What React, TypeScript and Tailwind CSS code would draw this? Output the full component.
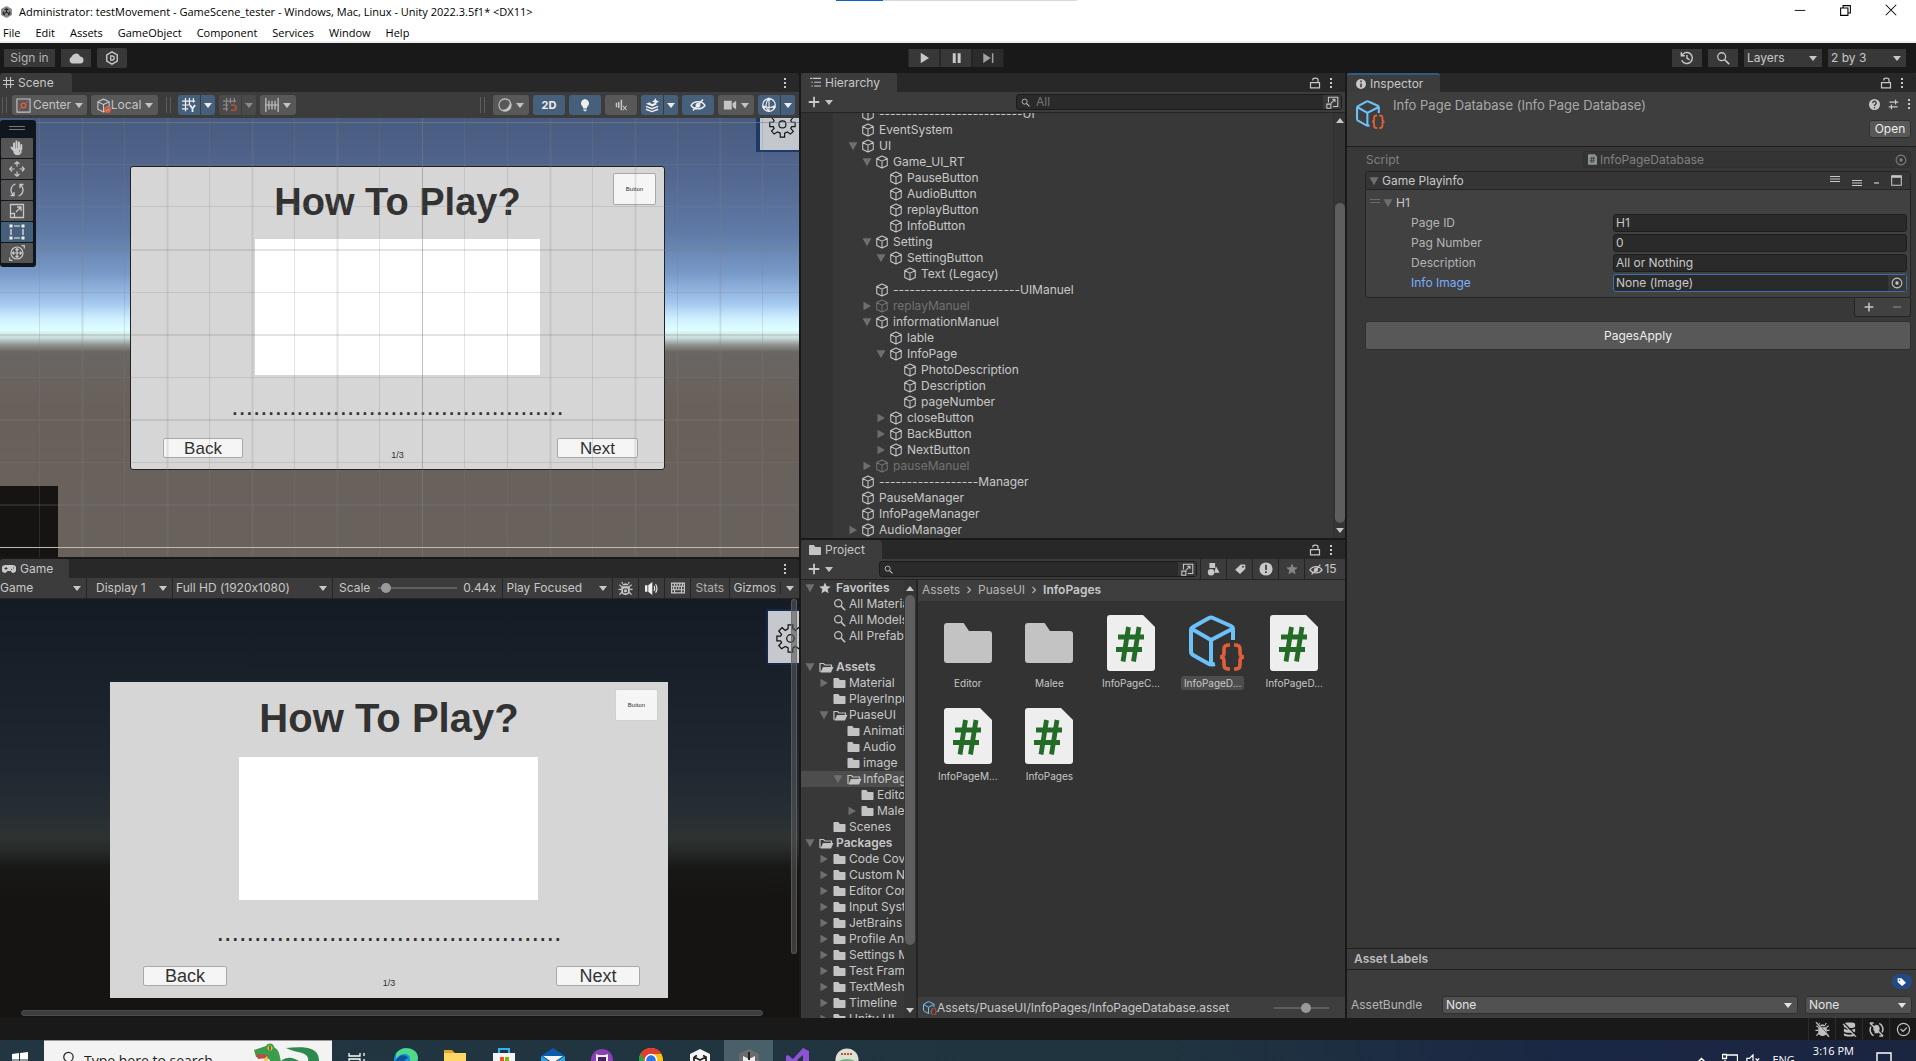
import React, { ReactNode } from "react";

/* ---------- small icons ---------- */

type IconProps = { className?: string };

const Svg = ({ className = "", box = 16, children }: { className?: string; box?: number; children: ReactNode }) => (
  <svg viewBox={`0 0 ${box} ${box}`} className={`shrink-0 ${className}`} fill="none" stroke="currentColor" aria-hidden="true">
    {children}
  </svg>
);

const Down = ({ className = "" }: IconProps) => (
  <svg viewBox="0 0 8 5" className={`h-[5px] w-2 shrink-0 ${className}`} fill="currentColor" aria-hidden="true">
    <path d="M0 0h8L4 5z" />
  </svg>
);
const Up = ({ className = "" }: IconProps) => (
  <svg viewBox="0 0 8 5" className={`h-[5px] w-2 shrink-0 ${className}`} fill="currentColor" aria-hidden="true">
    <path d="M0 5h8L4 0z" />
  </svg>
);
const Fold = ({ open, className = "" }: { open: boolean; className?: string }) => (
  <svg viewBox="0 0 10 10" className={`h-[10px] w-[10px] shrink-0 text-[#6e6e6e] ${className}`} fill="currentColor" aria-hidden="true">
    <path d={open ? "M.5 1.2h9L5 9.2z" : "M1.5 .8v8.4L9 5z"} />
  </svg>
);
const Cube = ({ className = "size-[14px]" }: IconProps) => (
  <Svg className={className}>
    <path strokeWidth="1.2" strokeLinejoin="round" d="M8 1.2 14 4v8l-6 2.9L2 12V4zM2.2 4.2 8 7l5.8-2.8M8 7v7.6" />
  </Svg>
);
const Kebab = () => (
  <Svg className="h-3 w-1">
    <path d="M4-12h8v8H4zM4 4h8v8H4zM4 20h8v8H4z" fill="currentColor" stroke="none" />
  </Svg>
);
const Lock = () => (
  <Svg className="size-3">
    <path strokeWidth="1.6" d="M2 7.5h12v7H2zM5 4.500V3.500C5 .8 12 .8 12 3.500v4" />
  </Svg>
);
const Search = ({ className = "size-3" }: IconProps) => (
  <Svg className={className}>
    <circle cx="6.500" cy="6.500" r="4.500" strokeWidth="1.5" />
    <path strokeWidth="1.8" d="m10 10 5 5" />
  </Svg>
);
const Popout = () => (
  <Svg className="size-[13px]">
    <path strokeWidth="1.3" d="M3 8V1.500h11.500V13H8.500M1 10h5v5H1zM6 9l5-5M7.500 4H11v3.500" />
  </Svg>
);
const Folder = ({ className = "h-[10px] w-[13px]" }: IconProps) => (
  <svg viewBox="0 0 24 20" className={`shrink-0 ${className}`} fill="#c3c3c3" aria-hidden="true">
    <path d="M1.500 0h8.300l2.700 4H22.500a1.500 1.500 0 0 1 1.500 1.500v13a1.500 1.500 0 0 1-1.500 1.500h-21A1.500 1.500 0 0 1 0 18.500v-17A1.500 1.500 0 0 1 1.500 0z" />
  </svg>
);
const FolderOpen = () => (
  <svg viewBox="0 0 15 11" className="h-[11px] w-[15px] shrink-0" fill="none" stroke="#c3c3c3" aria-hidden="true">
    <path d="M1 10V1.500h3.500L6 3h6.500v2" strokeWidth="1.2" />
    <path d="M4 5h10.500l-2.500 5.500H1.500z" fill="#c3c3c3" stroke="none" />
  </svg>
);
const Star = ({ className = "size-3" }: IconProps) => (
  <Svg className={className}>
    <path fill="currentColor" stroke="none" d="m8 .5 2.200 5 5.500.500-4.200 3.600 1.300 5.400L8 12.200 3.200 15l1.300-5.400L.3 6l5.500-.5z" />
  </Svg>
);
const Tag = ({ className = "size-3" }: IconProps) => (
  <Svg className={className}>
    <path fill="currentColor" stroke="none" fillRule="evenodd" d="M9 2h6v6l-7 6.500L1.500 9zM12 3.800a1.300 1.300 0 1 0 0 2.600 1.300 1.300 0 0 0 0-2.600z" />
  </Svg>
);
const EyeOff = ({ className = "h-3 w-4" }: IconProps) => (
  <svg viewBox="0 0 16 12" className={`shrink-0 ${className}`} fill="none" stroke="currentColor" aria-hidden="true">
    <path strokeWidth="1.400" d="M1 6.500C4 1.500 12 1.500 15 6.500 12 11 4 11 1 6.500zM13 .5 3 11.500" />
    <circle cx="8" cy="6.300" r="2" fill="currentColor" />
  </svg>
);
const ObjectCube = ({ className = "" }: IconProps) => (
  <Svg className={className} box={56}>
    <path stroke="#6cc1f8" strokeWidth="4" strokeLinejoin="round" strokeLinecap="butt" d="M44 25V14Q44 12 42 11L24 3Q22 2 20 3L4 12Q2 13 2 15V36Q2 39 4 40L20 49Q22 50 26 49M3 14l19 11 21-11M22 25v24" />
    <path stroke="#df5f3a" strokeWidth="3.600" d="M41 30h-1q-5 0-5 4v4q0 4-4 4 4 0 4 4v4q0 4 5 4h1M45 30h1q5 0 5 4v4q0 4 4 4-4 0-4 4v4q0 4-5 4h-1" />
  </Svg>
);
const Sharp = ({ className = "" }: IconProps) => (
  <svg viewBox="0 0 48 56" className={className} fill="none" aria-hidden="true">
    <path d="M3 0h33l12 12v41a3 3 0 0 1-3 3H3a3 3 0 0 1-3-3V3a3 3 0 0 1 3-3z" fill="#eee" />
    <path d="M11 22h26M9 34.500h26M21.500 12 16 46.500M32 12l-5.500 34.500" stroke="#256b28" strokeWidth="4.800" />
  </svg>
);
const Gear = ({ className = "" }: IconProps) => (
  <Svg className={className} box={32}>
    <path
      strokeWidth="1.300"
      stroke="#111"
      d="M14 6V2h5v4l3 2 3-3 3.500 3.500L26 12l1 2h4v5h-4l-1 2 3 3.500-3.500 3L22 25l-3 1.500V31h-5v-4.500L11 25l-4 2.500L4 24l3-3-1-2H2v-5h4l1-2-3-3.500L7.500 5 11 8z"
    />
    <circle cx="16.500" cy="16.500" r="4" strokeWidth="1.300" stroke="#111" />
  </Svg>
);
const UnityLogo = ({ className = "" }: IconProps) => (
  <Svg className={className} box={24}>
    <path d="m12 1 10 5.500v11L12 23 2 17.500v-11z" fill="currentColor" stroke="none" />
    <path d="M12 12V5.500M12 12l-6 3.500M12 12l6 3.500M8.500 8 12 6l3.500 2M6 11v4.500l3.500 2.200M18 11v4.500l-3.500 2.200" stroke="#222" strokeWidth="2" />
  </Svg>
);
const Target = () => (
  <Svg className="size-3">
    <circle cx="8" cy="8" r="6.500" strokeWidth="1.400" />
    <circle cx="8" cy="8" r="2.200" fill="currentColor" stroke="none" />
  </Svg>
);
const Plus = ({ className = "size-3" }: IconProps) => (
  <Svg className={className}>
    <path strokeWidth="2.400" d="M8 1v14M1 8h14" />
  </Svg>
);
const Bug = ({ className = "size-4", off = false }: { className?: string; off?: boolean }) => (
  <Svg className={className}>
    <path strokeWidth="1.300" d="M4 6 1.500 4M12 6l2.500-2M3.500 9H.5M12.500 9h3M4 12l-2.500 2.500M12 12l2.500 2.500M5 3 4 1M11 3l1-2" />
    <path fill="currentColor" stroke="none" d="M4.500 4.500C5 2 11 2 11.500 4.500zM3.500 5.500h9v6c0 4.500-9 4.500-9 0z" />
    <path stroke="#2f2f2f" strokeWidth="1" d={off ? "M3 1l12 14" : "M6 8.500h4v4H6z"} />
    {off && <path strokeWidth="1.300" d="M1 0l14 16" />}
  </Svg>
);
const Grip = ({ className = "" }: IconProps) => <span className={`h-4 w-[5px] shrink-0 border-x border-[#5c5c5c] ${className}`} />;

/* ---------- shared controls ---------- */

function Select({ label, value, className = "", text = "pl-1" }: { label: string; value: string; className?: string; text?: string }) {
  return (
    <div className={`relative flex shrink-0 items-center ${className}`}>
      <select aria-label={label} className={`h-full w-full appearance-none bg-transparent outline-none ${text}`}>
        <option>{value}</option>
      </select>
      <Down className="pointer-events-none absolute right-[5px]" />
    </div>
  );
}

function ToolButton({ label, on = false, menu = false, split = false, dim = false, className = "w-8", children }: {
  label: string; on?: boolean; menu?: boolean; split?: boolean; dim?: boolean; className?: string; children: ReactNode;
}) {
  const tone = on ? "bg-[#46607c] text-[#eeeeee]" : dim ? "bg-[#4a4a4a] text-[#8a8a8a]" : "bg-[#585858] text-[#c4c4c4]";
  if (split)
    return (
      <div className="flex h-5 w-[37px] shrink-0 gap-px">
        <button aria-label={label} className={`flex w-[22px] items-center justify-center rounded-l-[3px] ${tone}`}>{children}</button>
        <button aria-label={`${label} options`} className={`flex flex-1 items-center justify-center rounded-r-[3px] ${tone}`}><Down /></button>
      </div>
    );
  return (
    <button aria-label={label} className={`flex h-5 shrink-0 items-center justify-center gap-1 rounded-[3px] ${tone} ${className}`}>
      {children}
      {menu && <Down />}
    </button>
  );
}

function PanelTabs({ icon, title, width, active = false, lock = false }: { icon: ReactNode; title: string; width: string; active?: boolean; lock?: boolean }) {
  return (
    <div className="flex h-[19px] shrink-0 items-stretch justify-between rounded-t-[3px] bg-[#282828]">
      <button className={`flex items-center gap-1 rounded-t-[3px] bg-[#3c3c3c] ${active ? "border-t-2 border-[#2c5d87]" : ""} ${width}`}>
        {icon}
        {title}
      </button>
      <div className="flex items-center gap-2 pr-3">
        {lock && <button aria-label={`Lock ${title}`}><Lock /></button>}
        <button aria-label={`${title} menu`}><Kebab /></button>
      </div>
    </div>
  );
}

/* ---------- title bar, main toolbar ---------- */

const menus = ["File", "Edit", "Assets", "GameObject", "Component", "Services", "Window", "Help"];

function TitleBar() {
  return (
    <header className="relative flex h-[43px] shrink-0 flex-col border-b-2 border-[#eef0f0] bg-white font-['Open_Sans',sans-serif] text-[12px] text-black">
      <div className="absolute top-0 left-[836px] flex h-px w-[241px] bg-[#d9d9d9]"><span className="w-[47px] bg-[#0a64c8]" /></div>
      <div className="flex h-6 items-center">
        <UnityLogo className="h-[14px] w-[13px] text-[#8a8a8a]" />
        <span className="ml-1.5 text-[11px]">Administrator: testMovement - GameScene_tester - Windows, Mac, Linux - Unity 2022.3.5f1* &lt;DX11&gt;</span>
        <div className="ml-auto flex gap-8 pr-[18px] pb-1">
          <button aria-label="Minimize"><Svg className="size-[14px]"><path d="M2 8.500h12" /></Svg></button>
          <button aria-label="Restore"><Svg className="size-[13px]"><path strokeWidth="1.300" d="M2 5h9v9H2zM5 5V2h9v9h-3" /></Svg></button>
          <button aria-label="Close"><Svg className="size-[14px]"><path strokeWidth="1.200" d="m2 2 12 12M14 2 2 14" /></Svg></button>
        </div>
      </div>
      <nav className="flex flex-1 items-center gap-[15px] pl-[3px] text-[11px]">
        {menus.map((m) => <button key={m}>{m}</button>)}
      </nav>
    </header>
  );
}

function MainToolbar() {
  return (
    <div className="relative flex h-[30px] shrink-0 items-center justify-between bg-[#191919] px-1">
      <div className="flex items-center gap-[6px]">
        <button className="h-[18px] w-[51px] bg-[#383838] text-[#b4b4b4]">Sign in</button>
        <button aria-label="Cloud services" className="flex h-[18px] w-[30px] items-center justify-center bg-[#383838]">
          <Svg className="size-4"><path fill="currentColor" stroke="none" d="M4 13.500a3.500 3.500 0 0 1-.5-6.500 2.500 2.500 0 0 1 1.500-2 4 4 0 0 1 7 1.500 3.500 3.500 0 0 1 0 7z" /></Svg>
        </button>
        <button aria-label="Version control" className="flex h-5 w-[30px] items-center justify-center rounded-[2px] bg-[#383838]">
          <Svg className="size-[14px]"><path strokeWidth="1.600" d="m8 1 6 3.500v7L8 15l-6-3.500v-7z" /><path strokeWidth="1.500" d="M6.500 5.500H8a2.200 2.200 0 0 1 0 5H6.500z" /></Svg>
        </button>
      </div>
      <div className="absolute left-1/2 flex -translate-x-1/2 gap-px pr-1">
        <button aria-label="Play" className="flex h-[18px] w-[31px] items-center justify-center bg-[#383838]"><Svg className="size-3"><path fill="currentColor" stroke="none" d="m3 1 11 7-11 7z" /></Svg></button>
        <button aria-label="Pause" className="flex h-[18px] w-[31px] items-center justify-center bg-[#383838]"><Svg className="size-3"><path fill="currentColor" stroke="none" d="M3 1.500h4v13H3zM9.500 1.500h4v13h-4z" /></Svg></button>
        <button aria-label="Step" className="flex h-[18px] w-[31px] items-center justify-center bg-[#2b2b2b] text-[#a0a0a0]"><Svg className="size-3"><path fill="currentColor" stroke="none" d="m1 1.500 10 6.500-10 6.500zM12.500 1.500h2v13h-2z" /></Svg></button>
      </div>
      <div className="flex h-[18px] items-stretch gap-1.5 pr-1.5">
        <button aria-label="Undo history" className="flex w-[30px] items-center justify-center bg-[#383838]">
          <Svg className="size-[14px]"><path strokeWidth="1.600" d="M2 5.500A6.300 6.300 0 1 1 2 10.500M1.500 1.500v4h4M8 4.500V8.500l3 1.500" /></Svg>
        </button>
        <button aria-label="Search" className="flex w-[30px] items-center justify-center bg-[#383838]"><Search className="size-[14px]" /></button>
        <Select label="Layers" value="Layers" className="w-[78px] bg-[#383838]" text="pl-[3px]" />
        <Select label="Layout" value="2 by 3" className="w-[78px] bg-[#383838]" text="pl-[3px]" />
      </div>
    </div>
  );
}

/* ---------- scene panel ---------- */

const sceneTools: { name: string; on?: boolean; icon: ReactNode }[] = [
  { name: "View", icon: <path strokeWidth="2" strokeLinecap="round" d="M5 8V3.500M7.500 7.500V1.500M10 8V2.500M12.300 9V5M2.500 7.500l3 3.500M5.500 9v3.500a3.500 3.500 0 0 0 6 0V8L7 9v3L9 13v-3" /> },
  { name: "Move", icon: <path strokeWidth="1.200" d="M8 .5v5M8 10.500v5M.5 8h5M10.500 8h5M5.500 3 8 .8 10.500 3M5.500 13 8 15.200l2.500-2.200M3 5.500.8 8 3 10.500M13 5.500 15.200 8 13 10.500" /> },
  { name: "Rotate", icon: <path strokeWidth="1.300" d="M6.500 2A6.300 6.300 0 0 0 4.500 13M9.500 14A6.300 6.300 0 0 0 11.500 3M1.500 13.500H5V10M14.500 2.500H11V6" /> },
  { name: "Scale", icon: <path strokeWidth="1.300" d="M1.500 1.500h13v13h-13zM1.500 10.500h4v4M7 9l5-5M8 4h4v4" /> },
  { name: "Rect", on: true, icon: <><path strokeWidth="1.200" d="M5 2h6M5 14h6M2 5v6M14 5v6" /><path fill="currentColor" stroke="none" d="M.5.5h3v3h-3zM12.500.5h3v3h-3zM.5 12.500h3v3h-3zM12.500 12.500h3v3h-3z" /></> },
  { name: "Transform", icon: <><circle cx="8" cy="8" r="6" strokeWidth="1.200" /><path strokeWidth="1.200" d="M8 3.500v9M3.500 8h9M6.500 5 8 3.500 9.500 5M6.500 11 8 12.500 9.500 11M5 6.500 3.500 8 5 9.500M11 6.500 12.500 8 11 9.500M12.500.7h2.800v2.800M3.500 15.300H.7v-2.800" /></> },
];

const vMinor = [39, 124, 209, 294, 379, 464, 592, 677, 762];
const vMajor = [82, 167, 252, 337, 550, 635, 720];

function SceneGrid() {
  return (
    <svg className="pointer-events-none absolute inset-0 h-full w-full" fill="none" stroke="#808080" aria-hidden="true">
      {vMinor.map((x) => <path key={x} d={`M${x + 0.5} 0v2000`} strokeOpacity=".22" />)}
      {vMajor.map((x) => <path key={x} d={`M${x + 0.5} 0v2000`} strokeOpacity=".2" strokeWidth="2" />)}
      <path d="M422.5 0v2000" strokeOpacity=".5" />
      <path d="M507.500 0v2000" strokeOpacity=".25" />
      {[46, 88, 174, 259, 344].map((y) => <path key={y} d={`M0 ${y + 0.5}h3000`} strokeOpacity=".22" />)}
      {[132, 217, 302, 387].map((y) => <path key={y} d={`M0 ${y}h3000`} strokeOpacity=".22" strokeWidth="2" />)}
      <path d="M0 4.500h3000" strokeOpacity=".6" />
      <path d="M0 429.500h3000" stroke="#bdb9b5" />
    </svg>
  );
}

const dots = ".".repeat(46);
const boardButton = "absolute flex items-center justify-center rounded-[2px] border border-[#a9a9a9] bg-[#f5f5f5] text-[#323232]";

function ScenePanel() {
  return (
    <section className="flex min-h-0 flex-[484_1_0] flex-col">
      <PanelTabs
        title="Scene"
        width="w-[72px] pl-[3px]"
        icon={<Svg className="size-[11px]"><path strokeWidth="1.500" d="M5 0v16M11 0v16M0 5h16M0 11h16" /></Svg>}
      />
      <div className="flex h-[26px] shrink-0 items-center gap-1 bg-[#3c3c3c] pr-1 pl-[2px]">
        <Grip className="mr-px" />
        <ToolButton label="Tool handle position" menu className="w-[75px]">
          <span className="flex items-center gap-0.5">
            <Svg className="size-[15px]"><path strokeWidth="1.200" d="M1 1h14v14H1z" /><g stroke="#e0603c"><circle cx="8" cy="8" r="2.500" strokeWidth="1.500" /><path d="m3 13 2-2M11 5l2-2" /></g></Svg>
            Center
          </span>
        </ToolButton>
        <ToolButton label="Tool handle rotation" menu className="w-[67px]">
          <span className="flex items-center">
            <span className="relative"><Cube className="size-[15px]" /><span className="absolute right-0 bottom-0 size-[7px] rounded-full border-2 border-[#e0603c]" /></span>
            Local
          </span>
        </ToolButton>
        <Grip className="mr-[3px] ml-1" />
        <ToolButton label="Grid visibility" on split>
          <Svg className="size-[14px]"><path strokeWidth="1.400" d="M4 0v15M8.500 0v8M13 0v5M0 3.500h15M0 8h8M0 12.500h7" /><path strokeWidth="2" d="m9 8 3 4 3-4M12 12v4" /></Svg>
        </ToolButton>
        <ToolButton label="Grid snapping" dim split>
          <Svg className="size-[14px]"><path strokeWidth="1.400" d="M4 0v15M8.500 0v6M13 0v5M0 3.500h15M0 8h6M0 12.500h6" /><path stroke="#a8503a" strokeWidth="2" d="M9 8h3a3 3 0 0 1 0 6H9" /></Svg>
        </ToolButton>
        <ToolButton label="Increment snapping" menu className="w-9">
          <Svg className="size-[14px]"><path strokeWidth="1.400" d="M1 0v16M15 0v16M4.500 3v10M8 3v10M11.500 3v10M0 8h16" /></Svg>
        </ToolButton>
        <Grip className="mr-1 ml-auto" />
        <ToolButton label="Draw mode" menu className="w-9">
          <Svg className="size-[14px]"><circle cx="8" cy="8" r="7" strokeWidth="1.200" /><path fill="currentColor" stroke="none" d="M13 3a7 7 0 1 1-10 10 8 8 0 0 0 10-10z" /></Svg>
        </ToolButton>
        <ToolButton label="2D view" on><span className="text-[11px] font-bold">2D</span></ToolButton>
        <ToolButton label="Scene lighting" on>
          <Svg className="size-[14px]"><path fill="currentColor" stroke="none" d="M8 1a5 5 0 0 1 2.500 9L10 12H6l-.5-2A5 5 0 0 1 8 1zM6 13h4v1L8 15.500 6 14z" /></Svg>
        </ToolButton>
        <ToolButton label="Scene audio">
          <Svg className="size-3"><path strokeWidth="2" d="M2 5v6M5 4v8M8.500 1v14" /><path strokeWidth="1.400" d="m10.500 9 5 6M15.500 9l-5 6" /></Svg>
        </ToolButton>
        <ToolButton label="Effects" on split>
          <Svg className="size-[15px]"><path fill="currentColor" stroke="none" d="M1 6l4-1.500 2 2 3-1 3 1L8 9zM11 0l1 2.500L15 4l-2.500 1L11 7 10 4.500 7.500 4 10 2.500z" /><path strokeWidth="1.500" d="m1 9 6.500 2.500L14 9M1 12l6.500 2.500L14 12" /></Svg>
        </ToolButton>
        <ToolButton label="Hidden objects" on><EyeOff /></ToolButton>
        <ToolButton label="Camera settings" menu className="w-9">
          <Svg className="size-[14px]"><path fill="currentColor" stroke="none" d="M1 3h9v10H1zM11 6l4-3v10l-4-3z" /></Svg>
        </ToolButton>
        <ToolButton label="Gizmos" on split>
          <Svg className="size-[16px]"><circle cx="8" cy="8" r="6.300" strokeWidth="1.200" /><path strokeWidth="1.100" d="M8 1.500c-4 4-4 9 0 13M2 9c4 2 8 2 12 0M8 2v13" /><circle cx="8" cy="2" r="1.600" fill="currentColor" stroke="none" /><circle cx="3" cy="10" r="1.600" fill="currentColor" stroke="none" /><circle cx="13" cy="10" r="1.600" fill="currentColor" stroke="none" /></Svg>
        </ToolButton>
      </div>

      <div className="relative min-h-0 flex-1 overflow-hidden bg-[linear-gradient(#485b80_0px,#536890_60px,#5f7aa6_115px,#7899c7_155px,#a3c7ee_185px,#cdeeff_200px,#dfffff_212px,#c9dbdb_220px,#8f9290_227px,#6a6663_234px,#69605a_290px,#69625c_440px)]">
        <div className="absolute bottom-0 left-0 h-[71px] w-[58px] bg-[#151413]" />
        <div className="absolute top-0 right-0 h-[34px] w-[43px] border-b-2 border-l-4 border-[#1d3a66] bg-[#c3c8cf]">
          <Gear className="absolute -top-2 left-2 size-7" />
        </div>
        <div className="absolute top-12 left-[130px] h-[304px] w-[535px] rounded-[3px] border border-[#222] bg-[#d6d6d6] font-['Liberation_Sans',sans-serif] text-[#323232]">
          <h2 className="absolute inset-x-0 top-[13px] text-center text-[38px] leading-[44px] font-bold">How To Play?</h2>
          <div className="absolute top-[72px] left-[124px] h-[136px] w-[285px] bg-white" />
          <p className="absolute inset-x-0 top-[226px] text-center text-[26px] leading-[26px] whitespace-nowrap">{dots}</p>
          <button className={`${boardButton} top-[6px] left-[482px] h-8 w-[43px] text-[6px]`}>Button</button>
          <button className={`${boardButton} top-[271px] left-8 h-5 w-20 text-[17px] leading-none`}>Back</button>
          <button className={`${boardButton} top-[271px] left-[426px] h-5 w-[81px] text-[17px] leading-none`}>Next</button>
          <span className="absolute inset-x-0 top-[283px] text-center text-[9px] leading-[10px]">1/3</span>
        </div>
        <SceneGrid />
        <div className="absolute top-0.5 left-0 flex h-[147px] w-9 flex-col items-start rounded-[3px] bg-[#10161e] pl-px">
          <span className="mt-[6px] mb-2 ml-2 h-1 w-4 border-y border-[#777]" />
          <div className="flex flex-col gap-px">
            {sceneTools.map((t) => (
              <button key={t.name} aria-label={`${t.name} tool`} className={`flex h-5 w-8 items-center justify-center rounded-[1px] ${t.on ? "bg-[#46607c] text-[#eee]" : "bg-[#545454]"}`}>
                <Svg className="size-4">{t.icon}</Svg>
              </button>
            ))}
          </div>
        </div>
      </div>
    </section>
  );
}

/* ---------- game panel ---------- */

function GamePanel() {
  const cell = "flex h-full shrink-0 items-center border-r border-[#242424]";
  return (
    <section className="flex min-h-0 flex-[459_1_0] flex-col">
      <PanelTabs
        title="Game"
        width="w-[69px] pl-[2px]"
        icon={<svg viewBox="0 0 14 8" className="h-2 w-[14px] shrink-0" aria-hidden="true"><path d="M3.500 0h7a3.500 3.500 0 0 1 0 8L8.500 6h-3l-2 2a3.500 3.500 0 0 1 0-8z" fill="currentColor" /><path d="M2.500 3.500h3M4 2v3M9 4.500h1M11 3h1" stroke="#3c3c3c" /></svg>}
      />
      <div className="flex h-[21px] shrink-0 items-center border-b border-[#242424] bg-[#3c3c3c]">
        <Select label="View" value="Game" className={`${cell} w-[87px]`} text="pl-0" />
        <Select label="Display" value="Display 1" className={`${cell} w-[86px]`} text="pl-[9px]" />
        <Select label="Resolution" value="Full HD (1920x1080)" className={`${cell} w-[160px]`} text="pl-[3px]" />
        <div className={`${cell} min-w-0 flex-1 pl-1.5`}>
          <label htmlFor="game-scale" className="mr-2">Scale</label>
          <input id="game-scale" type="range" min="0" max="100" defaultValue="4" className="h-[10px] w-[79px] appearance-none bg-[linear-gradient(#5e5e5e,#5e5e5e)] bg-[length:100%_2px] bg-center bg-no-repeat [&::-webkit-slider-thumb]:size-[10px] [&::-webkit-slider-thumb]:appearance-none [&::-webkit-slider-thumb]:rounded-full [&::-webkit-slider-thumb]:bg-[#999]" />
          <span className="ml-1.5">0.44x</span>
        </div>
        <Select label="Play mode" value="Play Focused" className={`${cell} w-[110px]`} text="pl-[3px]" />
        <button aria-label="Frame debugger" className={`${cell} w-[26px] justify-center`}><Bug className="size-[15px]" /></button>
        <button aria-label="Mute audio" className={`${cell} w-[26px] justify-center text-[#eee]`}>
          <Svg className="size-[13px]"><path fill="currentColor" stroke="none" d="M0 4h3v8H0zM4 4l5-4v16l-5-4z" /><path strokeWidth="1.400" d="M11 5q2 3 0 6M13 3q3.500 5 0 10" /></Svg>
        </button>
        <button aria-label="Shortcuts" className={`${cell} w-[26px] justify-center`}>
          <Svg className="size-[14px]"><path strokeWidth="1.300" d="M.7 2.500h14.600v11H.7zM1 6h14M1 10h14M4 2.500V6M7 2.500V6M10 2.500V6M13 2.500V6M3 6v4M6 6v4M9 6v4M12 6v4M4 10v3.500M12 10v3.500" /></Svg>
        </button>
        <button className={`${cell} w-[39px] pl-1 text-[#b0b0b0]`}>Stats</button>
        <button className="flex h-full shrink-0 items-center pl-[3px]">Gizmos</button>
        <button aria-label="Gizmos options" className="ml-1 flex h-3 w-[19px] shrink-0 items-center justify-center border-l border-[#242424]"><Down /></button>
      </div>

      <div className="relative min-h-0 flex-1 overflow-hidden bg-[linear-gradient(#151b25_0px,#19212b_90px,#1f2831_170px,#272e33_215px,#2e3332_240px,#252827_253px,#181817_268px,#161412_300px,#161412_420px)]">
        <div className="absolute top-[10px] right-0 h-14 w-[33px] border-2 border-r-0 border-[#14294a] bg-[#c6c8cd]">
          <Gear className="absolute top-3 left-[7px] size-[30px]" />
        </div>
        <div className="absolute top-[83px] left-[110px] h-[316px] w-[558px] bg-[#d6d6d6] font-['Liberation_Sans',sans-serif] text-[#323232]">
          <h2 className="absolute inset-x-0 top-[12px] text-center text-[40px] leading-[48px] font-bold">How To Play?</h2>
          <div className="absolute top-[75px] left-[129px] h-[143px] w-[299px] bg-white" />
          <p className="absolute inset-x-0 top-[237px] text-center text-[27px] leading-[27px] whitespace-nowrap">{dots}</p>
          <button className={`${boardButton} top-[7px] left-[505px] h-8 w-[43px] border-[#d0d0d0] text-[6px]`}>Button</button>
          <button className={`${boardButton} top-[284px] left-[33px] h-5 w-[84px] text-[18px] leading-none`}>Back</button>
          <button className={`${boardButton} top-[284px] left-[446px] h-5 w-[84px] text-[18px] leading-none`}>Next</button>
          <span className="absolute inset-x-0 top-[296px] text-center text-[9px] leading-[10px]">1/3</span>
        </div>
        <div className="absolute top-0 right-0.5 bottom-16 w-1.5 rounded-full border border-[#6a6a6a]/60 bg-[#555]/60" />
        <div className="absolute right-9 bottom-0.5 left-[21px] h-1.5 rounded-full border border-[#4c4c4c] bg-[#3c3c3c]" />
      </div>
    </section>
  );
}

/* ---------- hierarchy ---------- */

type Node = [depth: number, name: string, fold?: "open" | "closed", dim?: boolean];

const hierarchy: Node[] = [
  [0, "-".repeat(26) + "UI"],
  [0, "EventSystem"],
  [0, "UI", "open"],
  [1, "Game_UI_RT", "open"],
  [2, "PauseButton"],
  [2, "AudioButton"],
  [2, "replayButton"],
  [2, "InfoButton"],
  [1, "Setting", "open"],
  [2, "SettingButton", "open"],
  [3, "Text (Legacy)"],
  [1, "-".repeat(23) + "UIManuel"],
  [1, "replayManuel", "closed", true],
  [1, "informationManuel", "open"],
  [2, "lable"],
  [2, "InfoPage", "open"],
  [3, "PhotoDescription"],
  [3, "Description"],
  [3, "pageNumber"],
  [2, "closeButton", "closed"],
  [2, "BackButton", "closed"],
  [2, "NextButton", "closed"],
  [1, "pauseManuel", "closed", true],
  [0, "-".repeat(18) + "Manager"],
  [0, "PauseManager"],
  [0, "InfoPageManager"],
  [0, "AudioManager", "closed"],
];
const hierarchyIndent = ["pl-[15px]", "pl-[29px]", "pl-[43px]", "pl-[57px]"];

function AddButton({ label }: { label: string }) {
  return (
    <button aria-label={label} className="flex items-center gap-[5px] pl-[7px]">
      <Plus />
      <Down className="text-[#c4c4c4]" />
    </button>
  );
}

function HierarchyPanel() {
  return (
    <section className="flex min-h-0 flex-[465_1_0] flex-col bg-[#383838]">
      <PanelTabs
        title="Hierarchy"
        lock
        width="w-24 pl-[9px]"
        icon={<Svg className="size-[11px]"><path strokeWidth="1.500" d="M0 2h3M4 2h12M2 7.500h2M6 7.500h10M2 13h2M6 13h10" /></Svg>}
      />
      <div className="flex h-[21px] shrink-0 items-center justify-between border-b border-[#242424] bg-[#3c3c3c] pr-[3px]">
        <AddButton label="Create object" />
        <div className="flex h-4 w-[326px] items-center rounded-[3px] border border-[#1c1c1c] bg-[#2a2a2a] pl-1">
          <Search className="size-[9px]" />
          <input aria-label="Search hierarchy" placeholder="All" className="ml-1.5 min-w-0 flex-1 bg-transparent outline-none placeholder:text-[#757575]" />
          <button aria-label="Open search window" className="flex h-full w-[18px] items-center justify-center bg-[#383838]"><Popout /></button>
        </div>
      </div>
      <div className="flex min-h-0 flex-1 overflow-hidden">
        <div className="w-8 shrink-0 bg-[#323232]" />
        <ul className="-mt-[7px] min-w-0 flex-1">
          {hierarchy.map(([depth, name, fold, dim]) => (
            <li key={name} className={`flex h-4 items-center whitespace-nowrap ${hierarchyIndent[depth]} ${dim ? "text-[#727272]" : ""}`}>
              <span className="flex w-[13px]">{fold && <Fold open={fold === "open"} />}</span>
              <Cube />
              <span className="ml-1">{name}</span>
            </li>
          ))}
        </ul>
        <div className="flex w-3 shrink-0 flex-col items-center border-l border-[#303030] bg-[#353535] pt-[5px] pb-[5px]">
          <Up />
          <div className="flex w-[10px] flex-1 flex-col py-[5px]">
            <span className="flex-[75_1_0]" />
            <span className="flex-[319_1_0] rounded-full bg-[#5e5e5e]" />
          </div>
          <Down />
        </div>
      </div>
    </section>
  );
}

/* ---------- project ---------- */

type TreeNode = [depth: number, name: string, icon: "folder" | "open" | "search" | "star", fold?: "open" | "closed"];

const favorites: TreeNode[] = [
  [0, "Favorites", "star", "open"],
  [1, "All Materials", "search"],
  [1, "All Models", "search"],
  [1, "All Prefabs", "search"],
];
const projectTree: TreeNode[] = [
  [0, "Assets", "open", "open"],
  [1, "Material", "folder", "closed"],
  [1, "PlayerInput", "folder"],
  [1, "PuaseUI", "open", "open"],
  [2, "Animation", "folder"],
  [2, "Audio", "folder"],
  [2, "image", "folder"],
  [2, "InfoPages", "open", "open"],
  [3, "Editor", "folder"],
  [3, "Malee", "folder", "closed"],
  [1, "Scenes", "folder"],
  [0, "Packages", "open", "open"],
  [1, "Code Coverage", "folder", "closed"],
  [1, "Custom NUnit", "folder", "closed"],
  [1, "Editor Coroutines", "folder", "closed"],
  [1, "Input System", "folder", "closed"],
  [1, "JetBrains Rider Editor", "folder", "closed"],
  [1, "Profile Analyzer", "folder", "closed"],
  [1, "Settings Manager", "folder", "closed"],
  [1, "Test Framework", "folder", "closed"],
  [1, "TextMeshPro", "folder", "closed"],
  [1, "Timeline", "folder", "closed"],
  [1, "Unity UI", "folder", "closed"],
];
const treeIndent = ["pl-1", "pl-[18px]", "pl-8", "pl-[46px]"];

function TreeRow({ node: [depth, name, icon, fold] }: { node: TreeNode }) {
  return (
    <li className={`flex h-4 items-center whitespace-nowrap ${treeIndent[depth]} ${depth === 0 ? "font-semibold" : ""} ${name === "InfoPages" ? "bg-[#4d4d4d]" : ""}`}>
      <span className="flex w-[14px] shrink-0">{fold && <Fold open={fold === "open"} />}</span>
      <span className={`flex shrink-0 items-center ${depth === 0 ? "w-[17px]" : "w-4"}`}>
        {icon === "star" ? <Star /> : icon === "search" ? <Search className="size-[13px]" /> : icon === "open" ? <FolderOpen /> : <Folder />}
      </span>
      {name}
    </li>
  );
}

const assets: { name: string; kind: "folder" | "script" | "object"; selected?: boolean }[] = [
  { name: "Editor", kind: "folder" },
  { name: "Malee", kind: "folder" },
  { name: "InfoPageC...", kind: "script" },
  { name: "InfoPageD...", kind: "object", selected: true },
  { name: "InfoPageD...", kind: "script" },
  { name: "InfoPageM...", kind: "script" },
  { name: "InfoPages", kind: "script" },
];

const Chevron = () => (
  <Svg className="h-2 w-1.5"><path strokeWidth="3" d="m4 0 8 8-8 8" /></Svg>
);

function ProjectPanel() {
  const cell = "flex h-full items-center justify-center border-l border-[#242424]";
  return (
    <section className="flex min-h-0 flex-[478_1_0] flex-col bg-[#383838]">
      <PanelTabs title="Project" lock width="w-[81px] pl-2" icon={<Folder className="h-[10px] w-3" />} />
      <div className="flex h-[21px] shrink-0 items-center border-b border-[#242424] bg-[#3c3c3c]">
        <AddButton label="Create asset" />
        <div className="mr-[3px] ml-auto flex h-4 w-[318px] items-center rounded-[3px] border border-[#1c1c1c] bg-[#2a2a2a] pl-1">
          <Search className="size-[9px]" />
          <input aria-label="Search project" className="min-w-0 flex-1 bg-transparent outline-none" />
          <button aria-label="Open search window" className="flex h-full w-[18px] items-center justify-center bg-[#383838]"><Popout /></button>
        </div>
        <button aria-label="Search by type" className={`${cell} w-[26px]`}>
          <Svg className="size-[13px]"><path fill="currentColor" stroke="none" d="M3 0h7v6H3zM11 4l4.500 8H9z" /><circle cx="5" cy="11.500" r="4" fill="currentColor" stroke="none" /></Svg>
        </button>
        <button aria-label="Search by label" className={`${cell} w-[26px]`}><Tag /></button>
        <button aria-label="Search by import log" className={`${cell} w-[26px]`}>
          <Svg className="size-[14px]"><circle cx="8" cy="8" r="7.500" fill="currentColor" stroke="none" /><path stroke="#3c3c3c" strokeWidth="2" d="M8 3v6M8 10.500v2" /></Svg>
        </button>
        <button aria-label="Save search" className={`${cell} w-[26px] text-[#858585]`}><Star /></button>
        <button aria-label="Hidden packages" className={`${cell} w-[41px] gap-px pr-1`}><EyeOff className="h-[11px] w-[14px]" />15</button>
      </div>
      <div className="flex min-h-0 flex-1">
        <div className="w-[103px] shrink-0 overflow-hidden">
          <ul>{favorites.map((n) => <TreeRow key={n[1]} node={n} />)}</ul>
          <ul className="mt-[15px]">{projectTree.map((n) => <TreeRow key={n[1]} node={n} />)}</ul>
        </div>
        <div className="flex w-[14px] shrink-0 flex-col items-center border-r-2 border-[#242424] bg-[#353535] pt-[6px] pb-[5px]">
          <Up />
          <div className="flex w-[10px] flex-1 flex-col pt-1 pb-[5px]">
            <span className="flex-[349_1_0] rounded-full bg-[#5e5e5e]" />
            <span className="flex-[58_1_0]" />
          </div>
          <Down />
        </div>
        <div className="flex min-w-0 flex-1 flex-col bg-[#333]">
          <nav className="flex h-[21px] shrink-0 items-center gap-1.5 bg-[#3e3e3e] pb-px pl-1 text-[#b4b4b4]">
            <a href="#assets">Assets</a>
            <Chevron />
            <a href="#puaseui">PuaseUI</a>
            <Chevron />
            <a href="#infopages" className="font-semibold text-[#c8c8c8]">InfoPages</a>
          </nav>
          <div className="grid min-h-0 flex-1 auto-rows-[93px] grid-cols-5 overflow-hidden pt-[14px] pr-[10px] pl-[9px]">
            {assets.map((a, i) => (
              <button key={i} className="flex flex-col items-center text-[10px]">
                <span className="flex h-14 items-center justify-center">
                  {a.kind === "folder" && <Folder className="h-10 w-12" />}
                  {a.kind === "script" && <Sharp className="h-14 w-12" />}
                  {a.kind === "object" && <ObjectCube className="ml-2 size-14" />}
                </span>
                <span className={`mt-[5px] rounded-[3px] px-[3px] leading-[14px] ${a.selected ? "bg-[#4d4d4d]" : ""}`}>{a.name}</span>
              </button>
            ))}
          </div>
          <div className="flex h-[21px] shrink-0 items-center bg-[#3e3e3e] pl-[5px]">
            <ObjectCube className="size-[14px]" />
            <span>Assets/PuaseUI/InfoPages/InfoPageDatabase.asset</span>
            <input aria-label="Thumbnail size" type="range" min="0" max="100" defaultValue="60" className="mr-4 ml-auto h-[10px] w-[55px] appearance-none bg-[linear-gradient(#5e5e5e,#5e5e5e)] bg-[length:100%_2px] bg-center bg-no-repeat [&::-webkit-slider-thumb]:size-[10px] [&::-webkit-slider-thumb]:appearance-none [&::-webkit-slider-thumb]:rounded-full [&::-webkit-slider-thumb]:bg-[#999]" />
          </div>
        </div>
      </div>
    </section>
  );
}

/* ---------- inspector ---------- */

const fields = [
  { id: "page-id", label: "Page ID", value: "H1" },
  { id: "pag-number", label: "Pag Number", value: "0" },
  { id: "description", label: "Description", value: "All or Nothing" },
  { id: "info-image", label: "Info Image", value: "None (Image)", picker: true },
];

function InspectorPanel() {
  return (
    <section className="flex min-h-0 min-w-0 flex-col bg-[#383838]">
      <PanelTabs
        title="Inspector"
        active
        lock
        width="w-[93px] pl-[9px]"
        icon={<Svg className="size-[10px]"><circle cx="8" cy="8" r="8" fill="currentColor" stroke="none" /><path stroke="#3c3c3c" strokeWidth="2.500" d="M8 2.500v2.500M8 7v6" /></Svg>}
      />
      <div className="flex h-[55px] shrink-0 border-b border-[#1f1f1f] bg-[#3e3e3e] pt-[6px] pr-[5px] pl-[9px]">
        <ObjectCube className="mt-0.5 size-[29px]" />
        <h1 className="ml-2 text-[13px] leading-[14px] text-[#a8a8a8]">Info Page Database (Info Page Database)</h1>
        <div className="ml-auto flex flex-col items-end gap-[10px]">
          <div className="flex h-3 items-center gap-2">
            <button aria-label="Help"><Svg className="size-[11px]"><circle cx="8" cy="8" r="8" fill="currentColor" stroke="none" /><path stroke="#3c3c3c" strokeWidth="2" d="M5.500 6a2.500 2.500 0 1 1 3.500 2l-1 1v1M8 11.500v2" /></Svg></button>
            <button aria-label="Presets"><Svg className="size-[11px]"><path strokeWidth="1.800" d="M2 4.500h13M1 11.500h13M11 1v7M5 8v7" /></Svg></button>
            <button aria-label="Component menu"><Kebab /></button>
          </div>
          <button className="h-[18px] w-[42px] rounded-[3px] border border-[#303030] bg-[#585858] leading-none text-[#eee]">Open</button>
        </div>
      </div>
      <div className="flex flex-1 flex-col pr-[5px] pl-[18px]">
        <div className="mt-1 mb-[3px] flex h-[17px] items-center pl-px text-[#808080]">
          <label htmlFor="script" className="w-[217px] shrink-0">Script</label>
          <div className="flex h-[17px] min-w-0 flex-1 items-center rounded-[3px] border border-[#303030] bg-[#343434] pl-1">
            <Sharp className="h-[11px] w-[9px] opacity-50" />
            <input id="script" readOnly defaultValue="InfoPageDatabase" className="ml-[3px] min-w-0 flex-1 bg-transparent outline-none" />
            <button aria-label="Pick script" className="flex h-full w-[18px] items-center justify-center"><Target /></button>
          </div>
        </div>
        <div className="rounded-[3px] border border-[#242424] bg-[#414141]">
          <div className="flex h-[18px] items-center gap-[3px] border-b border-[#242424] bg-[#353535] pr-2 pl-[3px]">
            <Fold open />
            <span>Game Playinfo</span>
            <div className="ml-auto flex items-center gap-[12px]">
              <button aria-label="Expand all"><Svg className="mb-1 size-[10px]"><path strokeWidth="1.600" d="M0 4h16M0 8h16M0 12h16" /></Svg></button>
              <button aria-label="Collapse all"><Svg className="mt-1 size-[10px]"><path strokeWidth="1.600" d="M0 4h16M0 8h16M0 12h16" /></Svg></button>
              <button aria-label="Clear"><Svg className="mt-1 h-[8px] w-[5px]"><path strokeWidth="4" d="M0 8h16" /></Svg></button>
              <button aria-label="Full list"><Svg className="size-[11px]"><path strokeWidth="1.500" d="M1 1h14v14H1z" /><path strokeWidth="3" d="M1 2.500h14" /></Svg></button>
            </div>
          </div>
          <div className="mt-[3px] mb-px flex h-5 items-center pl-1">
            <span className="mr-[3px] mb-1 h-1 w-[10px] border-y border-[#6a6a6a]" />
            <Fold open />
            <span className="ml-[3px]">H1</span>
          </div>
          <div className="mb-[6px] flex flex-col gap-[3px] pr-[3px] pl-[45px]">
            {fields.map((f) => (
              <div key={f.id} className="flex h-[17px] items-center">
                <label htmlFor={f.id} className={`w-[202px] shrink-0 ${f.picker ? "text-[#7baefa]" : "text-[#b4b4b4]"}`}>{f.label}</label>
                <div className={`flex h-[18px] min-w-0 flex-1 rounded-[3px] border bg-[#2a2a2a] ${f.picker ? "border-[#3a72b0]" : "border-[#1e1e1e]"}`}>
                  <input id={f.id} defaultValue={f.value} className="min-w-0 flex-1 bg-transparent pl-0.5 outline-none" />
                  {f.picker && <button aria-label="Pick image" className="flex w-[18px] items-center justify-center bg-[#373737]"><Target /></button>}
                </div>
              </div>
            ))}
          </div>
        </div>
        <div className="flex h-[19px] w-[57px] items-center justify-around self-end rounded-b-[3px] border border-t-0 border-[#242424] bg-[#414141]">
          <button aria-label="Add page"><Plus className="size-[10px]" /></button>
          <button aria-label="Remove page" className="text-[#777]"><Svg className="size-2"><path strokeWidth="3" d="M0 8h16" /></Svg></button>
        </div>
        <button className="mt-[4px] h-[29px] rounded-[3px] border border-[#303030] bg-[#585858] text-[#eee]">PagesApply</button>
      </div>
      <h3 className="flex h-[22px] shrink-0 items-center border-y border-[#1f1f1f] bg-[#3c3c3c] pl-[7px] font-semibold text-[#bdbdbd]">Asset Labels</h3>
      <div className="flex h-12 shrink-0 flex-col items-end bg-[#3c3c3c] pt-1 pr-1">
        <button aria-label="Edit labels" className="flex h-[15px] w-5 items-center justify-center rounded-full bg-[#214a87] text-white"><Tag className="size-[10px] -scale-x-100" /></button>
        <div className="mt-[7px] flex h-[18px] w-full items-center gap-[7px] pl-1 text-[#b4b4b4]">
          <span className="w-[84px]">AssetBundle</span>
          <Select label="Asset bundle" value="None" className="h-[18px] flex-1 rounded-[3px] border border-[#303030] bg-[#515151] text-[#e4e4e4]" text="pl-[3px]" />
          <Select label="Asset bundle variant" value="None" className="h-[18px] w-[107px] rounded-[3px] border border-[#303030] bg-[#515151] text-[#e4e4e4]" text="pl-[3px]" />
        </div>
      </div>
    </section>
  );
}

/* ---------- status bar and taskbar ---------- */

function StatusBar() {
  const cell = "flex h-full w-[27px] items-center justify-center border-l border-[#2c2c2c]";
  return (
    <div className="flex h-[22px] shrink-0 items-center justify-end bg-[#191919] text-[#c0c0c0]">
      <button aria-label="Debugger" className={cell}><Bug className="size-[15px]" off /></button>
      <button aria-label="Cache server" className={cell}>
        <Svg className="size-[15px]"><path fill="currentColor" stroke="none" d="M2 2c0-2 12-2 12 0v3c0 2-12 2-12 0zM2 7c2 2 10 2 12 0v3c0 2-12 2-12 0zM2 12c2 2 10 2 12 0v2c0 2-12 2-12 0z" /><path stroke="#191919" strokeWidth="1.500" d="m2 1 13 13" /><path strokeWidth="1.200" d="m1 2 14 14" /></Svg>
      </button>
      <button aria-label="Auto lighting" className={cell}>
        <Svg className="size-[15px]"><path fill="currentColor" stroke="none" d="M8 3a4 4 0 0 1 2 7v2H6v-2a4 4 0 0 1 2-7z" /><path strokeWidth="1.600" d="M5 14.500A7 7 0 0 1 2 5M11 1.500A7 7 0 0 1 14 11M1 1l14 14M1 1h4M15 15h-4" /></Svg>
      </button>
      <button aria-label="Background tasks" className={cell}><Svg className="size-[15px]"><circle cx="8" cy="8" r="6.500" strokeWidth="1.300" /><path strokeWidth="1.500" d="m5 7.500 2.500 2.500 4-4" /></Svg></button>
    </div>
  );
}

const taskIcons: { name: string; active?: boolean; icon: ReactNode }[] = [
  { name: "Task View", icon: <path d="M4 3v3h11V3M4 16V9h11v7M19 3v3M19 9v8" stroke="#fff" strokeWidth="1.300" /> },
  { name: "Edge", icon: <><circle cx="12" cy="12" r="12" fill="#1b8fd8" /><path d="M2 6C7-3 24-1 24 10c0 5-9 5-8 1 0-6-9-7-14 0z" fill="#4fd98b" /><path d="M2 12c3-6 10-6 12-2-5 1-5 8 0 12C6 25-1 19 2 12z" fill="#0d539e" /></> },
  { name: "File Explorer", icon: <><path d="M1 2h8l3 3h11v6H1z" fill="#e5a524" /><path d="M1 5h22v17H1z" fill="#ffd767" /></> },
  { name: "Store", icon: <><path d="M7 6V1h10v5" stroke="#2fb4f0" strokeWidth="2" /><path d="M1 5h22v18H1z" fill="#f4f4f4" /><path d="M8 9h4v4H8z" fill="#f25022" /><path d="M13 9h4v4h-4z" fill="#7fba00" /><path d="M8 14h4v4H8z" fill="#00a4ef" /><path d="M13 14h4v4h-4z" fill="#ffb900" /></> },
  { name: "Mail", icon: <><path d="m0 8 12-8 12 8v4H0z" fill="#0b5cab" /><path d="M2 8h20l-10 7z" fill="#f5f5f5" /><path d="m0 8 12 8 12-8v15H0z" fill="#2aa5ea" /></> },
  { name: "GitHub Desktop", icon: <><circle cx="12" cy="12" r="11" fill="#8a3fb4" /><path d="M6 6l3 1h6l3-1v8l-4 4h-4l-4-4z" fill="#eee" /><path d="M8 9h8v5l-2 2h-4l-2-2z" fill="#4a1f66" /></> },
  { name: "Chrome", icon: <><circle cx="12" cy="12" r="12" fill="#fbc116" /><path d="M12 0a12 12 0 0 1 10.500 6H12a6 6 0 0 0-5 9L1.500 6A12 12 0 0 1 12 0z" fill="#e33b2e" /><path d="M1.500 6 7 15l5 3-2 6A12 12 0 0 1 1.500 6z" fill="#22a34a" /><circle cx="12" cy="12" r="5.500" fill="#2a75e8" stroke="#fff" strokeWidth="1.500" /></> },
  { name: "Unity Hub", icon: <><path d="m12 1 10 5v12l-10 5-10-5V6z" fill="#f4f4f4" /><path d="M6 9l6 3 6-3M12 12v7M6 9v7l6 3 6-3V9l-3-1.500M6 9l3-1.500" stroke="#222" strokeWidth="1.800" /></> },
  { name: "Unity", active: true, icon: <><path d="m12 1 10 5v12l-10 5-10-5V6z" fill="#6b6b6b" /><path d="m6 8 6 3 6-3v10l-6 3-6-3z" fill="#eee" /><path d="M12 4v8M8 14v4M16 14v4" stroke="#222" strokeWidth="2" /></> },
  { name: "Visual Studio", icon: <><path d="M17 0l6 3v18l-6 3L7 13l-5 4-2-1V8l2-1 5 4z" fill="#8d52d6" /><path d="m17 7-6 5 6 5z" fill="#213640" /></> },
  { name: "Player", icon: <><circle cx="12" cy="12" r="11.500" fill="#dfe0d4" /><path d="M6 6h12" stroke="#c0523f" strokeWidth="2" strokeDasharray="2 1" /><path d="M2 14q10-6 20 0v7H2z" fill="#6fae7c" /></> },
];

function Taskbar() {
  return (
    <footer className="flex h-[21px] shrink-0 items-start overflow-hidden bg-[linear-gradient(90deg,#213640,#20343f_60%,#1a2744_82%,#1a2540)] font-['Open_Sans',sans-serif] text-white">
      <button aria-label="Start" className="mt-3 ml-3 shrink-0"><Svg className="size-4"><path fill="#fff" stroke="none" d="M0 2l7-1v6.500H0zM8 1l8-1v7.500H8zM0 8.500h7V15l-7-1zM8 8.500h8V16l-8-1z" /></Svg></button>
      <label className="ml-4 flex h-10 w-[288px] shrink-0 items-center border-t border-[#999] bg-[#f3f3f3] pl-4 text-[#222]">
        <Svg className="-mt-1 size-[15px]"><circle cx="9" cy="6.500" r="5" strokeWidth="1.300" /><path strokeWidth="1.300" d="m6 11-4 5" /></Svg>
        <input aria-label="Type here to search" placeholder="Type here to search" className="ml-[9px] h-10 w-[170px] bg-transparent text-[14px] outline-none placeholder:text-[#222]" />
        <svg viewBox="0 0 66 36" className="-mt-px h-9 w-[66px]" aria-hidden="true">
          <path d="M26 20c8-8 16-3 22 1 8 2 10-9-4-11-6-1-9-3-12-4 14-1 34-3 33 14-2 12-20 15-33 13-12 0-16-10-16-14z" fill="#2c8a50" />
          <path d="M0 8 12 4c2-4 8-3 8 1 8 5 4 11 10 22l-6 2c-8-4-6-8-9-12L2 15z" fill="#3c9c4e" />
          <path d="M2 12l12 1-1 3-9 1z" fill="#c5463c" />
          <path d="M13 14c2 6 3 13 12 16l-2 3c-12-4-12-10-13-16z" fill="#ecc95a" />
          <circle cx="16" cy="6" r="2.500" fill="#e8c740" /><path d="M16 4v4" stroke="#111" />
        </svg>
      </label>
      <div className="flex">
        {taskIcons.map((t) => (
          <button key={t.name} aria-label={t.name} className={`flex h-10 w-[49px] shrink-0 items-start justify-center ${t.active ? "bg-[#49606b] pt-2" : t.name === "Task View" ? "pt-[10px]" : "pt-2"}`}>
            <Svg className="size-6" box={24}><g stroke="none">{t.icon}</g></Svg>
          </button>
        ))}
      </div>
      <div className="ml-auto flex shrink-0 items-start pr-6">
        <button aria-label="Hidden icons" className="mt-4 mr-[14px]"><Svg className="size-[13px]"><path strokeWidth="1.800" d="m2 9 6-6 6 6" /></Svg></button>
        <button aria-label="Network" className="mt-[13px] mr-2"><Svg className="size-4"><path strokeWidth="1.300" d="M5 2h10.500v9H3V7M.5 1.500h4v4h-4z" /></Svg></button>
        <button aria-label="Volume" className="mt-[14px] mr-3"><Svg className="size-[14px]"><path strokeWidth="1.400" d="M1 5h3l4-4v14l-4-4H1zM11 5l4 5M15 5l-4 5" /></Svg></button>
        <span className="mt-[12px] mr-[18px] text-[11px] leading-[16px]">ENG</span>
        <time className="mt-[3px] mr-[22px] text-[11px] leading-4">3:16 PM</time>
        <button aria-label="Notifications" className="mt-3"><Svg className="size-4"><path strokeWidth="1.400" d="M1 1h14v12H1z" /></Svg></button>
      </div>
    </footer>
  );
}

export default function App() {
  return (
    <div className="flex h-screen flex-col overflow-hidden bg-[#191919] font-['Inter',sans-serif] text-[12px] leading-4 text-[#c8c8c8] [font-feature-settings:'calt'_0]">
      <TitleBar />
      <MainToolbar />
      <main className="grid min-h-0 flex-1 grid-cols-[minmax(0,799fr)_minmax(0,544fr)_minmax(0,569fr)] gap-0.5">
        <div className="flex min-h-0 flex-col gap-0.5">
          <ScenePanel />
          <GamePanel />
        </div>
        <div className="flex min-h-0 flex-col gap-0.5">
          <HierarchyPanel />
          <ProjectPanel />
        </div>
        <InspectorPanel />
      </main>
      <StatusBar />
      <Taskbar />
    </div>
  );
}
